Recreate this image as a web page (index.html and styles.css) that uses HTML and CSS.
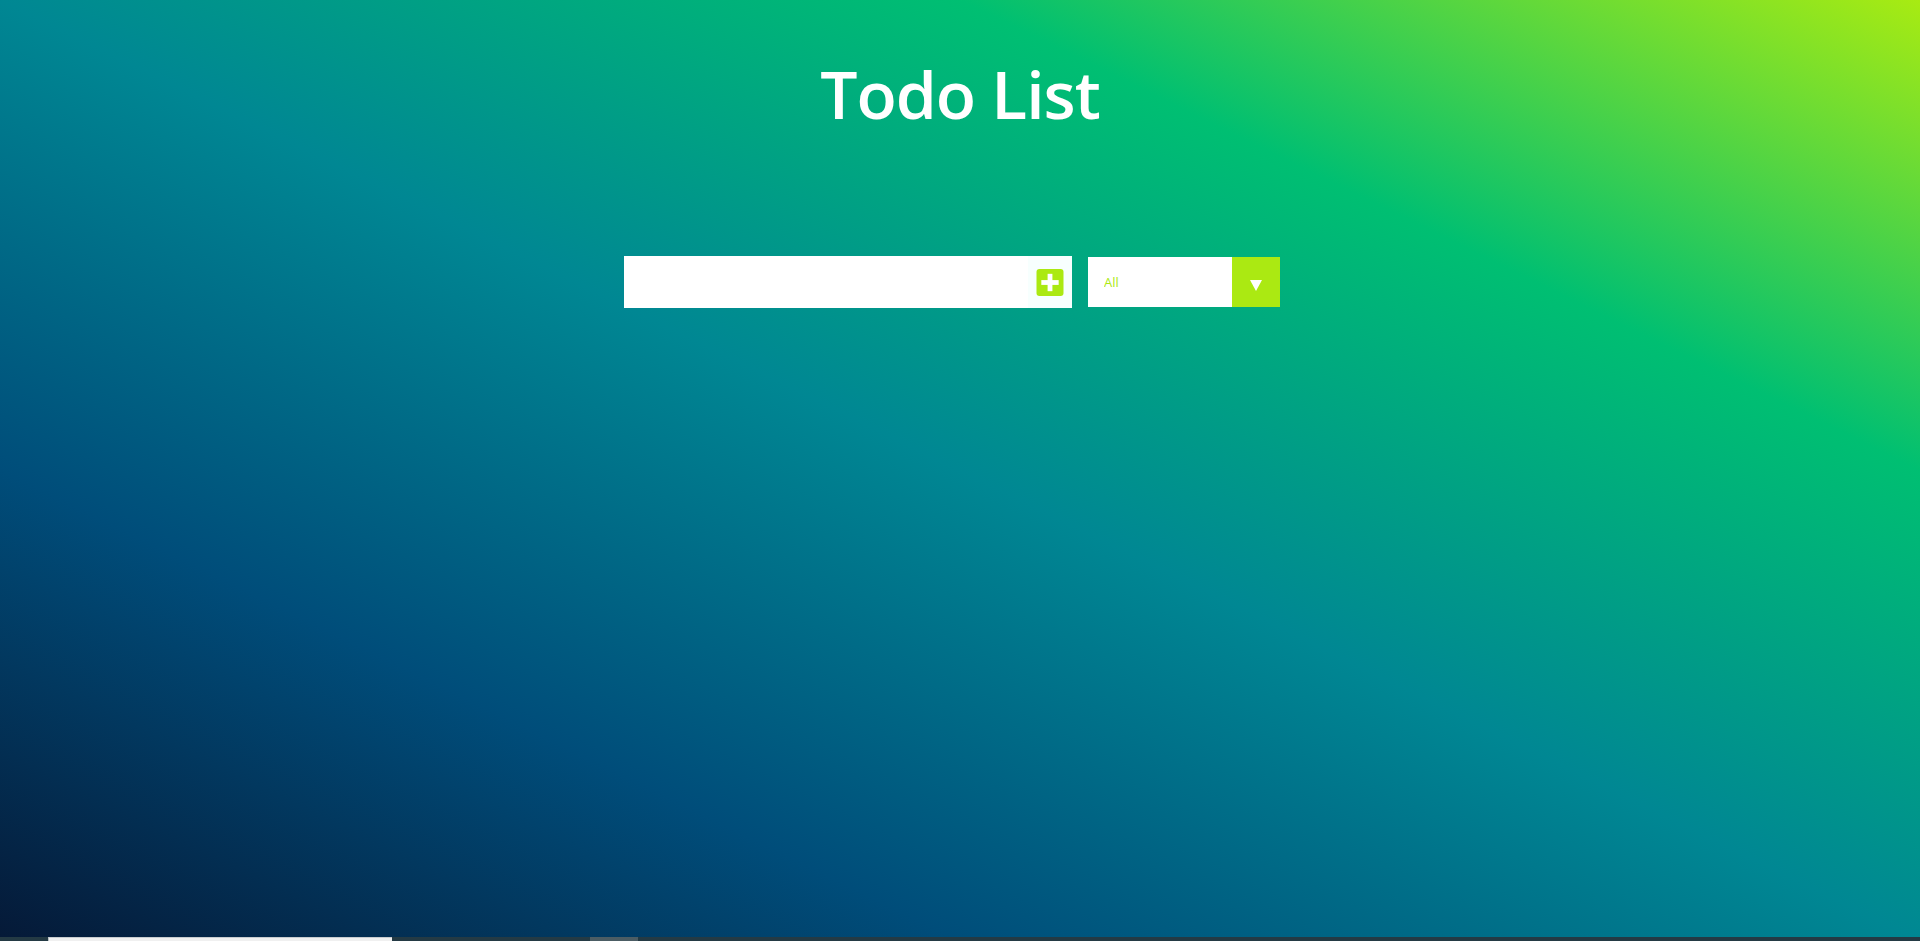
FILE: index.html
```html
<!DOCTYPE html>
<html lang="en">
<head>
<meta charset="utf-8">
<title>Todo List</title>
<link rel="stylesheet" href="styles.css">
</head>
<body>
<div class="app">
  <header class="header">
    <h1 class="title">Todo List</h1>
  </header>
  <form class="todo-form">
    <div class="todo-entry">
      <input type="text" class="todo-input" aria-label="New todo">
      <button type="button" class="todo-button" aria-label="Add">
        <svg class="plus-icon" viewBox="0 0 28 28" width="28" height="28" aria-hidden="true">
          <rect x="0" y="0" width="28" height="28" rx="3" ry="3" fill="#abe912"/>
          <rect x="11.5" y="5" width="5" height="18" fill="#ffffff"/>
          <rect x="5" y="11.5" width="18" height="5" fill="#ffffff"/>
        </svg>
      </button>
    </div>
    <div class="select">
      <select class="filter-todo" aria-label="Filter">
        <option>All</option>
        <option>Completed</option>
        <option>Uncompleted</option>
      </select>
      <span class="select-arrow"><span class="arrow-tri"></span></span>
    </div>
  </form>
  <div class="todo-container">
    <ul class="todo-list"></ul>
  </div>
</div>
<div class="bottom-strip">
  <div class="strip-thumb"></div>
  <div class="strip-gap"></div>
  <div class="strip-mark"></div>
</div>
</body>
</html>
```
FILE: styles.css
```css
* {
  margin: 0;
  padding: 0;
  box-sizing: border-box;
}

html, body {
  height: 100%;
}

body {
  font-family: "Open Sans", "Noto Sans", sans-serif;
  color: #ffffff;
  overflow: hidden;
}

.app {
  min-height: 100vh;
  background-image: linear-gradient(to right top, #051937, #004d7a, #008793, #00bf72, #a8eb12);
}

.header {
  min-height: 20vh;
  display: flex;
  justify-content: center;
  align-items: center;
}

.title {
  font-size: 66px;
  font-weight: 600;
  line-height: 1;
  letter-spacing: -1px;
  color: #ffffff;
  transform: translateY(-1px);
}

.todo-form {
  min-height: 20vh;
  display: flex;
  justify-content: center;
  align-items: center;
}

.todo-entry {
  display: flex;
  height: 52px;
}

.todo-input {
  width: 404px;
  height: 52px;
  border: none;
  outline: none;
  background: #ffffff;
  padding: 8px;
  font-size: 32px;
  font-family: inherit;
}

.todo-button {
  width: 44px;
  height: 52px;
  border: none;
  background: #f7fffe;
  display: flex;
  align-items: center;
  justify-content: center;
  cursor: pointer;
}

.plus-icon {
  display: block;
  width: 28px;
  height: 27px;
}

.select {
  margin: 0 16px;
  position: relative;
  overflow: hidden;
  width: 192px;
  height: 50px;
  display: flex;
}

.filter-todo {
  appearance: none;
  -webkit-appearance: none;
  border: none;
  outline: none;
  box-shadow: none;
  width: 192px;
  height: 50px;
  padding: 0 16px;
  background: #ffffff;
  color: #abe912;
  font-family: "Open Sans", "Noto Sans", sans-serif;
  font-size: 13px;
  cursor: pointer;
}

.select-arrow {
  position: absolute;
  top: 0;
  right: 0;
  width: 48px;
  height: 50px;
  background: #abe912;
  display: flex;
  align-items: center;
  justify-content: center;
  padding-top: 7px;
  pointer-events: none;
}

.arrow-tri {
  width: 0;
  height: 0;
  border-left: 6px solid transparent;
  border-right: 6px solid transparent;
  border-top: 11px solid #ffffff;
}

.todo-container {
  display: flex;
  justify-content: center;
}

.todo-list {
  list-style: none;
  min-width: 30%;
}

.bottom-strip {
  position: fixed;
  left: 0;
  right: 0;
  bottom: 0;
  height: 4px;
  background: #243a44;
  display: flex;
  padding-left: 48px;
}

.strip-thumb {
  width: 344px;
  height: 4px;
  background: #f0f0f0;
  border-left: 1px solid #b8c0c4;
  border-top: 1px solid #c8cccf;
}

.strip-gap {
  width: 198px;
}

.strip-mark {
  width: 48px;
  height: 4px;
  background: #4c5d64;
}
```
